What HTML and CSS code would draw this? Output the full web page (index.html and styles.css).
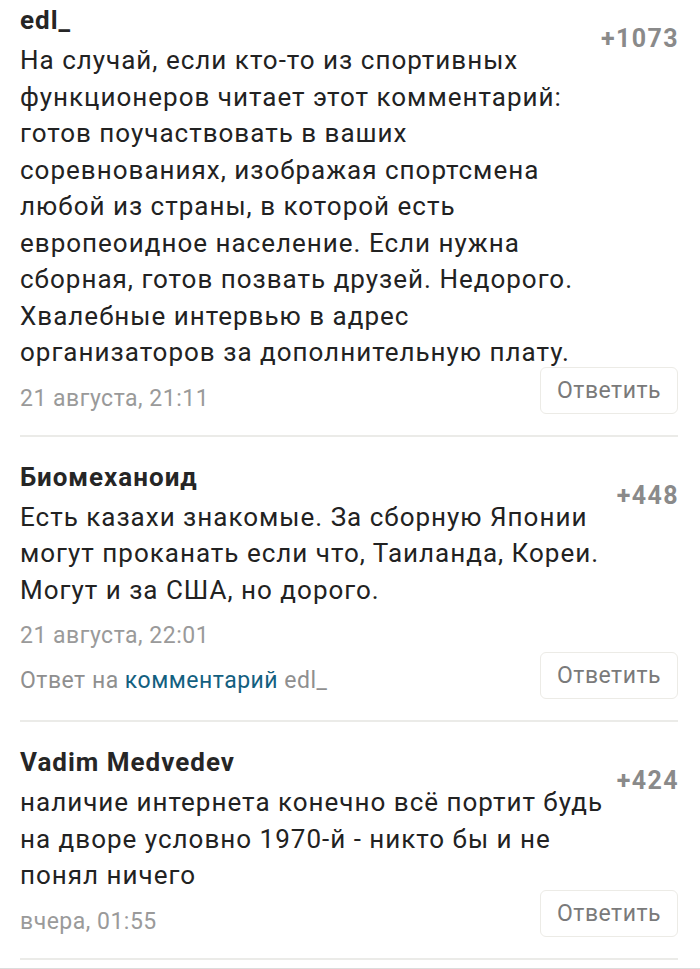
FILE: index.html
```html
<!DOCTYPE html>
<html lang="ru">
<head>
<meta charset="utf-8">
<link rel="stylesheet" href="styles.css">
</head>
<body>
<div class="feed">
  <article class="comment first">
    <header class="head">
      <span class="author">edl_</span>
      <span class="rating">+1073</span>
    </header>
    <p class="text">На случай, если кто-то из спортивных функционеров читает этот комментарий:<br>готов поучаствовать в ваших соревнованиях, изображая спортсмена любой из страны, в которой есть европеоидное население. Если нужна сборная, готов позвать друзей. Недорого. Хвалебные интервью в адрес организаторов за дополнительную плату.</p>
    <footer class="foot">
      <div class="meta">
        <div class="date">21 августа, 21:11</div>
      </div>
      <button class="reply">Ответить</button>
    </footer>
  </article>
  <article class="comment">
    <header class="head">
      <span class="author">Биомеханоид</span>
      <span class="rating">+448</span>
    </header>
    <p class="text">Есть казахи знакомые. За сборную Японии могут проканать если что, Таиланда, Кореи. Могут и за США, но дорого.</p>
    <footer class="foot">
      <div class="meta">
        <div class="date">21 августа, 22:01</div>
        <div class="parent">Ответ на <a class="link" href="#">комментарий</a> edl_</div>
      </div>
      <button class="reply">Ответить</button>
    </footer>
  </article>
  <article class="comment">
    <header class="head">
      <span class="author">Vadim Medvedev</span>
      <span class="rating">+424</span>
    </header>
    <p class="text">наличие интернета конечно всё портит будь на дворе условно 1970-й - никто бы и не понял ничего</p>
    <footer class="foot">
      <div class="meta">
        <div class="date">вчера, 01:55</div>
      </div>
      <button class="reply">Ответить</button>
    </footer>
  </article>
  <div class="next"></div>
</div>
</body>
</html>
```
FILE: styles.css
```css
html, body {
  margin: 0;
  padding: 0;
  background: #ffffff;
}
body {
  font-family: Roboto, "Noto Sans", sans-serif;
  color: #222222;
  overflow: hidden;
}
.feed {
  padding: 0 22px 0 20px;
}
.comment {
  padding: 25px 0 21px;
  border-bottom: 2px solid #ebebe8;
}
.comment.first {
  padding-top: 5px;
}
.head {
  display: flex;
  justify-content: space-between;
  align-items: flex-start;
  height: 30px;
}
.author {
  font-size: 26px;
  font-weight: 700;
  letter-spacing: 1px;
  line-height: 30px;
  color: #262626;
}
.rating {
  font-size: 25px;
  font-weight: 700;
  letter-spacing: 1.4px;
  line-height: 26px;
  color: #8a8a8a;
  margin-top: 21px;
  margin-right: -1px;
}
.text {
  margin: 7px 0 0;
  max-width: 590px;
  font-size: 26px;
  letter-spacing: 1px;
  line-height: 36.5px;
  color: #222222;
}
.foot {
  display: flex;
  justify-content: space-between;
  align-items: flex-end;
  margin-top: -4px;
}
.meta {
  display: flex;
  flex-direction: column;
  gap: 15px;
  padding-top: 17px;
  font-size: 23px;
  letter-spacing: 0.5px;
  line-height: 30px;
  color: #9a9a9a;
}
.parent {
  padding-bottom: 3px;
  color: #8f8f8f;
}
.link {
  color: #13607f;
  text-decoration: none;
}
.reply {
  width: 138px;
  height: 47px;
  padding: 0;
  border: 1.5px solid #ecebe6;
  border-radius: 6px;
  background: #ffffff;
  font-family: Roboto, "Noto Sans", sans-serif;
  font-size: 23px;
  letter-spacing: 0.5px;
  color: #7a7a7a;
}
.next {
  margin: 8px -22px 0 -20px;
  border-top: 2px solid #dcdcdc;
}
```
